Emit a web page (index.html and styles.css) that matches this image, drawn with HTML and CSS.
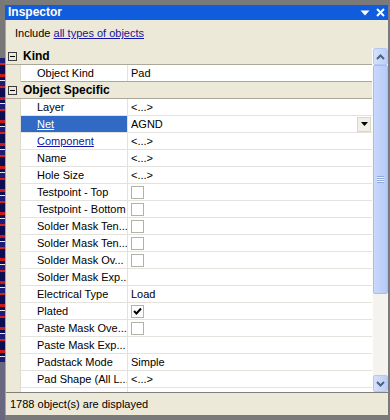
FILE: index.html
```html
<!DOCTYPE html>
<html lang="en">

<head>
    <meta charset="UTF-8">
    <title>Inspector</title>
    <link rel="stylesheet" href="styles.css">
</head>

<body>
    <div class="screen">
        <div class="pcb"></div>

        <div class="window">
            <div class="titlebar">
                <span class="caption">Inspector</span>
                <span class="tools">
                    <svg width="10" height="6" viewBox="0 0 10 6"><path d="M0.5 0.5 H9.5 L5 5.5 Z" fill="#fff" /></svg>
                    <svg width="9" height="9" viewBox="0 0 9 9"><path d="M1 1 L8 8 M8 1 L1 8" stroke="#fff" stroke-width="2" /></svg>
                </span>
            </div>

            <div class="panel">
                <div class="include">Include <a href="#">all types of objects</a></div>

                <div class="grid">
                    <div class="rows">
                        <div class="group"><span class="toggle"></span>Kind</div>
                        <div class="row end"><span class="indent"></span><span class="name">Object Kind</span><span class="value">Pad</span></div>

                        <div class="group"><span class="toggle"></span>Object Specific</div>
                        <div class="row"><span class="indent"></span><span class="name">Layer</span><span class="value">&lt;...&gt;</span></div>
                        <div class="row selected"><span class="indent"></span><span class="name"><a href="#">Net</a></span><span class="value">AGND<span class="dropdown"><svg width="7" height="4" viewBox="0 0 7 4"><path d="M0 0 H7 L3.5 4 Z" fill="#000" /></svg></span></span></div>
                        <div class="row"><span class="indent"></span><span class="name"><a href="#">Component</a></span><span class="value">&lt;...&gt;</span></div>
                        <div class="row"><span class="indent"></span><span class="name">Name</span><span class="value">&lt;...&gt;</span></div>
                        <div class="row"><span class="indent"></span><span class="name">Hole Size</span><span class="value">&lt;...&gt;</span></div>
                        <div class="row"><span class="indent"></span><span class="name">Testpoint - Top</span><span class="value"><span class="check"></span></span></div>
                        <div class="row"><span class="indent"></span><span class="name">Testpoint - Bottom</span><span class="value"><span class="check"></span></span></div>
                        <div class="row"><span class="indent"></span><span class="name">Solder Mask Ten...</span><span class="value"><span class="check"></span></span></div>
                        <div class="row"><span class="indent"></span><span class="name">Solder Mask Ten...</span><span class="value"><span class="check"></span></span></div>
                        <div class="row"><span class="indent"></span><span class="name">Solder Mask Ov...</span><span class="value"><span class="check"></span></span></div>
                        <div class="row"><span class="indent"></span><span class="name">Solder Mask Exp...</span><span class="value"></span></div>
                        <div class="row"><span class="indent"></span><span class="name">Electrical Type</span><span class="value">Load</span></div>
                        <div class="row"><span class="indent"></span><span class="name">Plated</span><span class="value"><span class="check"><svg width="11" height="11" viewBox="0 0 11 11"><path d="M2 5 L4.5 7.5 L9 2.5" stroke="#000" stroke-width="2" fill="none" /></svg></span></span></div>
                        <div class="row"><span class="indent"></span><span class="name">Paste Mask Ove...</span><span class="value"><span class="check"></span></span></div>
                        <div class="row"><span class="indent"></span><span class="name">Paste Mask Exp...</span><span class="value"></span></div>
                        <div class="row"><span class="indent"></span><span class="name">Padstack Mode</span><span class="value">Simple</span></div>
                        <div class="row"><span class="indent"></span><span class="name">Pad Shape (All L...</span><span class="value">&lt;...&gt;</span></div>
                        <div class="row"><span class="indent"></span><span class="name">Pad Hole Size (All L...</span><span class="value">&lt;...&gt;</span></div>
                    </div>

                    <div class="scrollbar">
                        <div class="sb-btn">
                            <svg width="9" height="6" viewBox="0 0 9 6"><path d="M1 5 L4.5 1.5 L8 5" stroke="#4d6185" stroke-width="2" fill="none" /></svg>
                        </div>
                        <div class="thumb">
                            <span class="grip"></span>
                        </div>
                        <div class="track"></div>
                        <div class="sb-btn">
                            <svg width="9" height="6" viewBox="0 0 9 6"><path d="M1 1 L4.5 4.5 L8 1" stroke="#4d6185" stroke-width="2" fill="none" /></svg>
                        </div>
                    </div>
                </div>

                <div class="status">1788 object(s) are displayed</div>
            </div>
        </div>
    </div>
</body>

</html>
```

FILE: styles.css
```css
* {
    box-sizing: border-box;
}

body {
    margin: 0;
    font-family: 'Liberation Sans', Arial, sans-serif;
    font-size: 11px;
    color: #000;
    background: #7a7a7a;
}

.screen {
    display: flex;
    width: 390px;
    height: 420px;
    padding: 5px 2px 5px 0;
    background: #7a7a7a;
}

.pcb {
    width: 5px;
    margin-top: -5px;
    margin-bottom: -5px;
    background:
        linear-gradient(to bottom, #787878 0 58px, transparent 58px 362px, #6a6780 362px 100%),
        repeating-linear-gradient(to bottom, #0c0c52 0 5px, #c81a1a 5px 8px, #0c0c52 8px 11px, #e6e6e6 11px 12px, #1b1b78 12px 17px, #d02020 17px 19px, #0c0c52 19px 23px);
}

.window {
    width: 383px;
    display: flex;
    flex-direction: column;
}

.titlebar {
    height: 15px;
    line-height: 15px;
    background: #0f5cdc;
    color: #fff;
    display: flex;
    align-items: center;
    padding: 0 3px 0 3px;

    .caption {
        font-weight: bold;
        font-size: 12px;
    }

    .tools {
        margin-left: auto;
        display: flex;
        align-items: center;
        gap: 6px;
    }
}

.panel {
    flex: 1;
    display: flex;
    flex-direction: column;
    background: #ece9d8;
    border-left: 1px solid #a8a699;
}

a {
    color: #1414a0;
    text-decoration: underline;
}

.include {
    height: 28px;
    line-height: 26px;
    padding-left: 9px;
}

.grid {
    height: 344px;
    display: flex;
}

.rows {
    flex: 1;
    overflow: hidden;
}

.group {
    height: 17px;
    line-height: 16px;
    border-bottom: 1px solid #aca899;
    display: flex;
    align-items: center;
    font-weight: bold;
    font-size: 12px;
    padding-left: 2px;

    .toggle {
        position: relative;
        width: 9px;
        height: 9px;
        border: 1px solid #3c3c3c;
        margin-right: 6px;

        &::after {
            content: "";
            position: absolute;
            left: 1px;
            right: 1px;
            top: 3px;
            height: 1px;
            background: #000;
        }
    }
}

.row {
    height: 17px;
    display: flex;
    border-bottom: 1px solid #e3e2dc;

    &.end {
        border-bottom-color: #aca899;
    }

    .indent {
        width: 15px;
        background: #ece9d8;
        border-right: 1px solid #dcdacd;
        margin-bottom: -1px;
    }

    .name {
        width: 107px;
        line-height: 16px;
        padding-left: 16px;
        background: #fff;
        border-right: 1px solid #e3e2dc;
        white-space: nowrap;
        overflow: hidden;
    }

    .value {
        flex: 1;
        display: flex;
        align-items: center;
        line-height: 16px;
        padding-left: 3px;
        background: #fff;
    }

    &.selected .name {
        background: #316ac5;

        a {
            color: #fff;
        }
    }
}

.check {
    width: 13px;
    height: 13px;
    border: 1px solid #b4b2a8;
    background: #fff;
    display: flex;
    align-items: center;
    justify-content: center;
}

.dropdown {
    margin-left: auto;
    margin-right: 1px;
    width: 14px;
    height: 15px;
    background: #f1efe6;
    border: 1px solid #dcd8c8;
    display: flex;
    align-items: center;
    justify-content: center;
}

.scrollbar {
    width: 16px;
    display: flex;
    flex-direction: column;
    background: #f4f3ee;
    border-left: 1px solid #fdfdfb;

    .sb-btn {
        height: 17px;
        border: 1px solid #b5c8f3;
        border-radius: 2px;
        background: linear-gradient(to right, #d5e1fc, #bccdf7);
        display: flex;
        align-items: center;
        justify-content: center;
    }

    .thumb {
        height: 229px;
        border: 1px solid #a6bbee;
        border-radius: 2px;
        background: linear-gradient(to right, #c9d8fc, #b7cbf8);
        display: flex;
        align-items: center;
        justify-content: center;
    }

    .grip {
        width: 7px;
        height: 7px;
        background: repeating-linear-gradient(to bottom, #8ea6d8 0 1px, #eef3fe 1px 2px);
    }

    .track {
        flex: 1;
    }
}

.status {
    height: 23px;
    border-top: 1px solid #7f7e78;
    line-height: 22px;
    padding-left: 4px;
}
```
